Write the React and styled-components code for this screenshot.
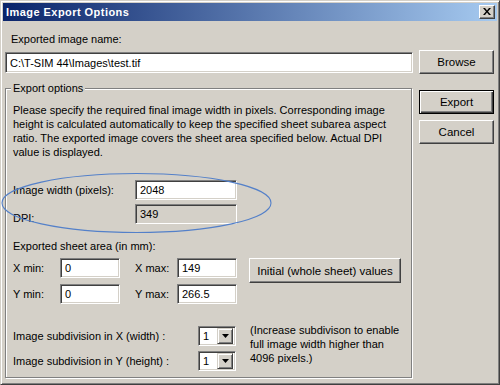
import React from 'react'
import styled, { createGlobalStyle } from 'styled-components'

const GlobalStyle = createGlobalStyle`
  html, body {
    margin: 0;
    padding: 0;
    background: #d4d0c8;
    overflow: hidden;
  }
  * {
    box-sizing: border-box;
  }
`

const FACE = '#d4d0c8'

function App() {
  return (
    <>
      <GlobalStyle />
      <Window>
        <TitleBar>
          <Title>Image Export Options</Title>
          <CloseButton aria-label="Close">
            <svg width="8" height="7" viewBox="0 0 8 7">
              <path d="M0 0h2l2 2.5L6 0h2L5 3.5 8 7H6L4 4.5 2 7H0l3-3.5z" fill="#000" />
            </svg>
          </CloseButton>
        </TitleBar>

        <Body>
          <MainColumn>
            <Caption>Exported image name:</Caption>
            <Field $width={408} $height={21} $top={6}>C:\T-SIM 44\Images\test.tif</Field>

            <GroupBox>
              <Legend>Export options</Legend>
              <Paragraph>
                Please specify the required final image width in pixels. Corresponding image<br />
                height is calculated automatically to keep the specified sheet subarea aspect<br />
                ratio. The exported image covers the sheet area specified below. Actual DPI<br />
                value is displayed.
              </Paragraph>

              <FormRow $top={21}>
                <RowLabel $width={122}>Image width (pixels):</RowLabel>
                <Field $width={102}>2048</Field>
              </FormRow>
              <FormRow $top={4}>
                <RowLabel $width={122} $low>DPI:</RowLabel>
                <Field $width={102} $disabled>349</Field>
              </FormRow>

              <SectionTitle>Exported sheet area (in mm):</SectionTitle>

              <FormRow $top={5}>
                <RowLabel $width={47}>X min:</RowLabel>
                <Field $width={60}>0</Field>
                <RowLabel $width={42} $gap={15}>X max:</RowLabel>
                <Field $width={60}>149</Field>
                <Button $width={152} $height={25} $gap={12}>Initial (whole sheet) values</Button>
              </FormRow>
              <FormRow $top={6}>
                <RowLabel $width={47}>Y min:</RowLabel>
                <Field $width={60}>0</Field>
                <RowLabel $width={42} $gap={15}>Y max:</RowLabel>
                <Field $width={60}>266.5</Field>
              </FormRow>

              <Subdivision>
                <SubRows>
                  <FormRow>
                    <RowLabel $width={185}>Image subdivision in X (width) :</RowLabel>
                    <Dropdown value="1" />
                  </FormRow>
                  <FormRow $top={5}>
                    <RowLabel $width={185}>Image subdivision in Y (height) :</RowLabel>
                    <Dropdown value="1" />
                  </FormRow>
                </SubRows>
                <Note>
                  (Increase subdivison to enable<br />
                  full image width higher than<br />
                  4096 pixels.)
                </Note>
              </Subdivision>
            </GroupBox>
          </MainColumn>

          <SideColumn>
            <Button $width={75} $height={24} $top={28}>Browse</Button>
            <Button $width={75} $height={24} $top={16} $default>Export</Button>
            <Button $width={75} $height={24} $top={6}>Cancel</Button>
          </SideColumn>
        </Body>

        <Highlight width="500" height="385" viewBox="0 0 500 385">
          <ellipse cx="136.5" cy="203" rx="134.5" ry="29.5" fill="none" stroke="#5480c9" strokeWidth="1.1" />
        </Highlight>
      </Window>
    </>
  )
}

function Dropdown({ value }) {
  return (
    <Select>
      <SelectValue>{value}</SelectValue>
      <SelectArrow>
        <svg width="7" height="4" viewBox="0 0 7 4">
          <path d="M0 0h7L3.5 4z" fill="#000" />
        </svg>
      </SelectArrow>
    </Select>
  )
}

export default App

const Window = styled.div`
  position: relative;
  width: 500px;
  height: 385px;
  background: ${FACE};
  padding: 1px;
  border: 1px solid;
  border-color: ${FACE} #404040 #404040 ${FACE};
  box-shadow: inset 1px 1px 0 #fff, inset -1px -1px 0 #808080;
  font-family: "Liberation Sans", Arial, sans-serif;
  font-size: 11px;
  color: #000;
  overflow: hidden;
`

const TitleBar = styled.div`
  display: flex;
  align-items: center;
  justify-content: space-between;
  height: 18px;
  margin: 1px;
  padding: 0 2px 0 3px;
  background: linear-gradient(to right, #0a246a, #a6caf0);
`

const Title = styled.span`
  color: #fff;
  font-weight: bold;
  font-size: 11px;
  letter-spacing: 0.45px;
`

const CloseButton = styled.div`
  display: flex;
  align-items: center;
  justify-content: center;
  width: 16px;
  height: 14px;
  background: ${FACE};
  border: 1px solid;
  border-color: #fff #404040 #404040 #fff;
  box-shadow: inset -1px -1px 0 #808080;
  padding-bottom: 1px;
`

const Body = styled.div`
  display: flex;
  gap: 6px;
  padding: 0 2px 0 3px;
`

const MainColumn = styled.div`
  display: flex;
  flex-direction: column;
  width: 408px;
`

const SideColumn = styled.div`
  display: flex;
  flex-direction: column;
  width: 75px;
`

const Caption = styled.div`
  margin-top: 10px;
  padding-left: 6px;
  line-height: 14px;
  height: 14px;
`

const Field = styled.div`
  display: flex;
  align-items: center;
  width: ${p => p.$width}px;
  height: ${p => p.$height || 20}px;
  margin-top: ${p => p.$top || 0}px;
  padding: 0 4px;
  background: ${p => (p.$disabled ? FACE : '#fff')};
  border: 1px solid;
  border-color: #808080 #fff #fff #808080;
  box-shadow: inset 1px 1px 0 #404040, inset -1px -1px 0 ${FACE};
  white-space: nowrap;
  flex-shrink: 0;
`

const GroupBox = styled.div`
  position: relative;
  margin-top: 15px;
  width: 407px;
  height: 290px;
  padding: 14px 0 0 7px;
  border: 1px solid #808080;
  box-shadow: inset 1px 1px 0 #fff, 1px 1px 0 #fff;
`

const Legend = styled.span`
  position: absolute;
  top: -8px;
  left: 5px;
  padding: 0 2px;
  line-height: 14px;
  background: ${FACE};
`

const Paragraph = styled.p`
  margin: 0;
  line-height: 14px;
  white-space: nowrap;
`

const FormRow = styled.div`
  display: flex;
  align-items: center;
  margin-top: ${p => p.$top || 0}px;
  height: 20px;
`

const RowLabel = styled.span`
  width: ${p => p.$width}px;
  margin-left: ${p => p.$gap || 0}px;
  flex-shrink: 0;
  white-space: nowrap;
  align-self: ${p => (p.$low ? 'flex-end' : 'center')};
  line-height: 14px;
  margin-bottom: ${p => (p.$low ? '-1px' : '0')};
`

const SectionTitle = styled.div`
  margin-top: 15px;
  line-height: 14px;
`

const Button = styled.div`
  display: flex;
  align-items: center;
  justify-content: center;
  width: ${p => p.$width}px;
  height: ${p => p.$height}px;
  margin-top: ${p => p.$top || 0}px;
  margin-left: ${p => p.$gap || 0}px;
  align-self: flex-start;
  flex-shrink: 0;
  background: ${FACE};
  border: 1px solid;
  border-color: ${p => (p.$default ? '#000' : '#fff #404040 #404040 #fff')};
  box-shadow: ${p =>
    p.$default
      ? 'inset 1px 1px 0 #fff, inset -1px -1px 0 #404040, inset -2px -2px 0 #808080'
      : 'inset -1px -1px 0 #808080'};
  white-space: nowrap;
  font-size: 11.5px;
`

const Subdivision = styled.div`
  display: flex;
  margin-top: 22px;
`

const SubRows = styled.div`
  display: flex;
  flex-direction: column;
`

const Select = styled.div`
  display: flex;
  align-items: center;
  width: 38px;
  height: 20px;
  padding: 2px;
  background: #fff;
  border: 1px solid;
  border-color: #808080 #fff #fff #808080;
  box-shadow: inset 1px 1px 0 #404040, inset -1px -1px 0 ${FACE};
`

const SelectValue = styled.span`
  flex: 1;
  padding-left: 2px;
`

const SelectArrow = styled.div`
  display: flex;
  align-items: center;
  justify-content: center;
  width: 16px;
  height: 16px;
  background: ${FACE};
  border: 1px solid;
  border-color: ${FACE} #404040 #404040 ${FACE};
  box-shadow: inset 1px 1px 0 #fff, inset -1px -1px 0 #808080;
`

const Note = styled.div`
  margin: -3px 0 0 14px;
  line-height: 14px;
  white-space: nowrap;
`

const Highlight = styled.svg`
  position: absolute;
  left: -1px;
  top: -1px;
  pointer-events: none;
`
